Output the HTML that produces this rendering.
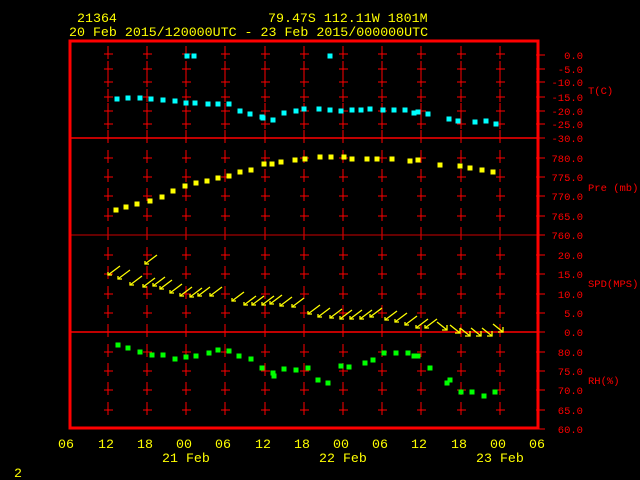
<!DOCTYPE html>
<html><head><style>
html,body{margin:0;padding:0;background:#000;width:640px;height:480px;overflow:hidden}
svg{display:block}
text{font-family:"Liberation Mono",monospace}
</style></head><body>
<svg width="640" height="480" xmlns="http://www.w3.org/2000/svg">
<g fill="#ffff00" font-size="13.3">
<text x="77" y="22">21364</text>
<text x="268" y="22">79.47S  112.11W  1801M</text>
<text x="69" y="36">20 Feb 2015/120000UTC - 23 Feb 2015/000000UTC</text>
<text x="58" y="448">06</text><text x="98" y="448">12</text><text x="137" y="448">18</text>
<text x="176" y="448">00</text><text x="215" y="448">06</text><text x="255" y="448">12</text>
<text x="294" y="448">18</text><text x="333" y="448">00</text><text x="372" y="448">06</text>
<text x="411" y="448">12</text><text x="451" y="448">18</text><text x="490" y="448">00</text>
<text x="529" y="448">06</text>
<text x="162" y="462">21 Feb</text><text x="319" y="462">22 Feb</text><text x="476" y="462">23 Feb</text>
<text x="14" y="477">2</text>
</g>
<g id="grid" stroke="#ff0000" stroke-width="1"></g>
<line x1="70" y1="138" x2="538" y2="138" stroke="#f00" stroke-width="1.5"/>
<line x1="70" y1="235" x2="538" y2="235" stroke="#c00" stroke-width="1"/>
<line x1="70" y1="332" x2="538" y2="332" stroke="#f00" stroke-width="1.5"/>
<rect x="70" y="41" width="468" height="387" fill="none" stroke="#f00" stroke-width="3"/>
<g fill="#ff0000" font-size="10.5" text-anchor="end" id="rl"></g>
<g fill="#ff0000" font-size="10.5">
<text x="588" y="94">T(C)</text>
<text x="588" y="191">Pre (mb)</text>
<text x="588" y="287">SPD(MPS)</text>
<text x="588" y="384">RH(%)</text>
</g>
<g id="pts"></g>
<g id="wind" stroke="#ffff00" stroke-width="1.3" fill="none"></g>
</svg>
<script>
var ns="http://www.w3.org/2000/svg";
function el(p,n,a){var e=document.createElementNS(ns,n);for(var k in a)e.setAttribute(k,a[k]);p.appendChild(e);return e;}
var g=document.getElementById('grid');
var cols=[108,147,186,225,265,304,343,382,421,461,500];
var rows=[54,69,82,97,111,124,138,158,177,196,216,235,255,274,294,313,332,352,371,390,410];
cols.forEach(function(x){rows.forEach(function(y){
el(g,'line',{x1:x,y1:y-8,x2:x,y2:y+5});el(g,'line',{x1:x-4,y1:y,x2:x+5,y2:y});});});
var rl=document.getElementById('rl');
var labs=[[55,"0.0"],[69,"-5.0"],[82,"-10.0"],[97,"-15.0"],[111,"-20.0"],[124,"-25.0"],[138,"-30.0"],
[158,"780.0"],[177,"775.0"],[196,"770.0"],[216,"765.0"],[235,"760.0"],
[255,"20.0"],[274,"15.0"],[294,"10.0"],[313,"5.0"],[332,"0.0"],
[352,"80.0"],[371,"75.0"],[390,"70.0"],[410,"65.0"],[429,"60.0"]];
labs.forEach(function(l){var t=el(rl,'text',{x:583,y:l[0]+4});t.textContent=l[1];
el(g,'line',{x1:536,y1:l[0],x2:545,y2:l[0]});});
var P=document.getElementById('pts');
function pts(arr,c){arr.forEach(function(p){el(P,'rect',{x:p[0]-2.5,y:p[1]-2.5,width:5,height:5,fill:c});});}
pts([[187,56],[194,56],[330,56],[117,99],[128,98],[140,98],[151,99],[163,100],[175,101],[186,103],[195,103],[208,104],[218,104],[229,104],[240,111],[250,114],[262,117],[263,118],[273,120],[284,113],[296,111],[304,109],[319,109],[330,110],[341,111],[352,110],[361,110],[370,109],[383,110],[394,110],[405,110],[414,113],[418,112],[428,114],[449,119],[458,121],[475,122],[486,121],[496,124]],"#00ffff");
pts([[116,210],[126,207],[137,204],[150,201],[162,197],[173,191],[185,186],[196,183],[207,181],[218,178],[229,176],[240,172],[251,170],[264,164],[272,164],[281,162],[295,160],[305,159],[320,157],[331,157],[344,157],[352,159],[367,159],[377,159],[392,159],[410,161],[418,160],[440,165],[460,166],[470,168],[482,170],[493,172]],"#ffff00");
pts([[118,345],[128,348],[140,352],[152,355],[163,355],[175,359],[186,357],[196,356],[209,353],[218,350],[229,351],[239,356],[251,359],[262,368],[273,373],[274,376],[284,369],[296,370],[308,368],[318,380],[328,383],[341,366],[349,367],[365,363],[373,360],[384,353],[396,353],[408,353],[414,356],[418,356],[430,368],[447,383],[450,380],[461,392],[472,392],[484,396],[495,392]],"#00ff00");
var W=document.getElementById('wind');
function arrow(x,y,dx,dy){el(W,'line',{x1:x,y1:y,x2:x+dx,y2:y+dy});
var L=Math.hypot(dx,dy),ux=dx/L,uy=dy/L,h=5;
el(W,'polyline',{points:(x+ux*h)+","+y+" "+x+","+y+" "+x+","+(y+uy*h)});}
var ws=[[108,275],[118,279],[130,285],[143,287],[145,264],[153,286],[160,289],[170,293],[180,296],[190,297],[198,296],[210,296],[232,301],[244,305],[252,305],[262,305],[270,304],[280,306],[292,307],[308,314],[318,317],[330,318],[340,319],[350,319],[360,319],[370,317],[385,320],[395,322],[405,325],[416,328],[425,328]];
ws.forEach(function(w){arrow(w[0],w[1],12,-9);});
[[447,330],[460,333],[470,336],[481,336],[492,336],[503,332]].forEach(function(w){
var x=w[0],y=w[1];el(W,'line',{x1:x-10,y1:y-8,x2:x,y2:y});
el(W,'polyline',{points:(x-5)+","+y+" "+x+","+y+" "+x+","+(y-5)});});
</script>
</body></html>
